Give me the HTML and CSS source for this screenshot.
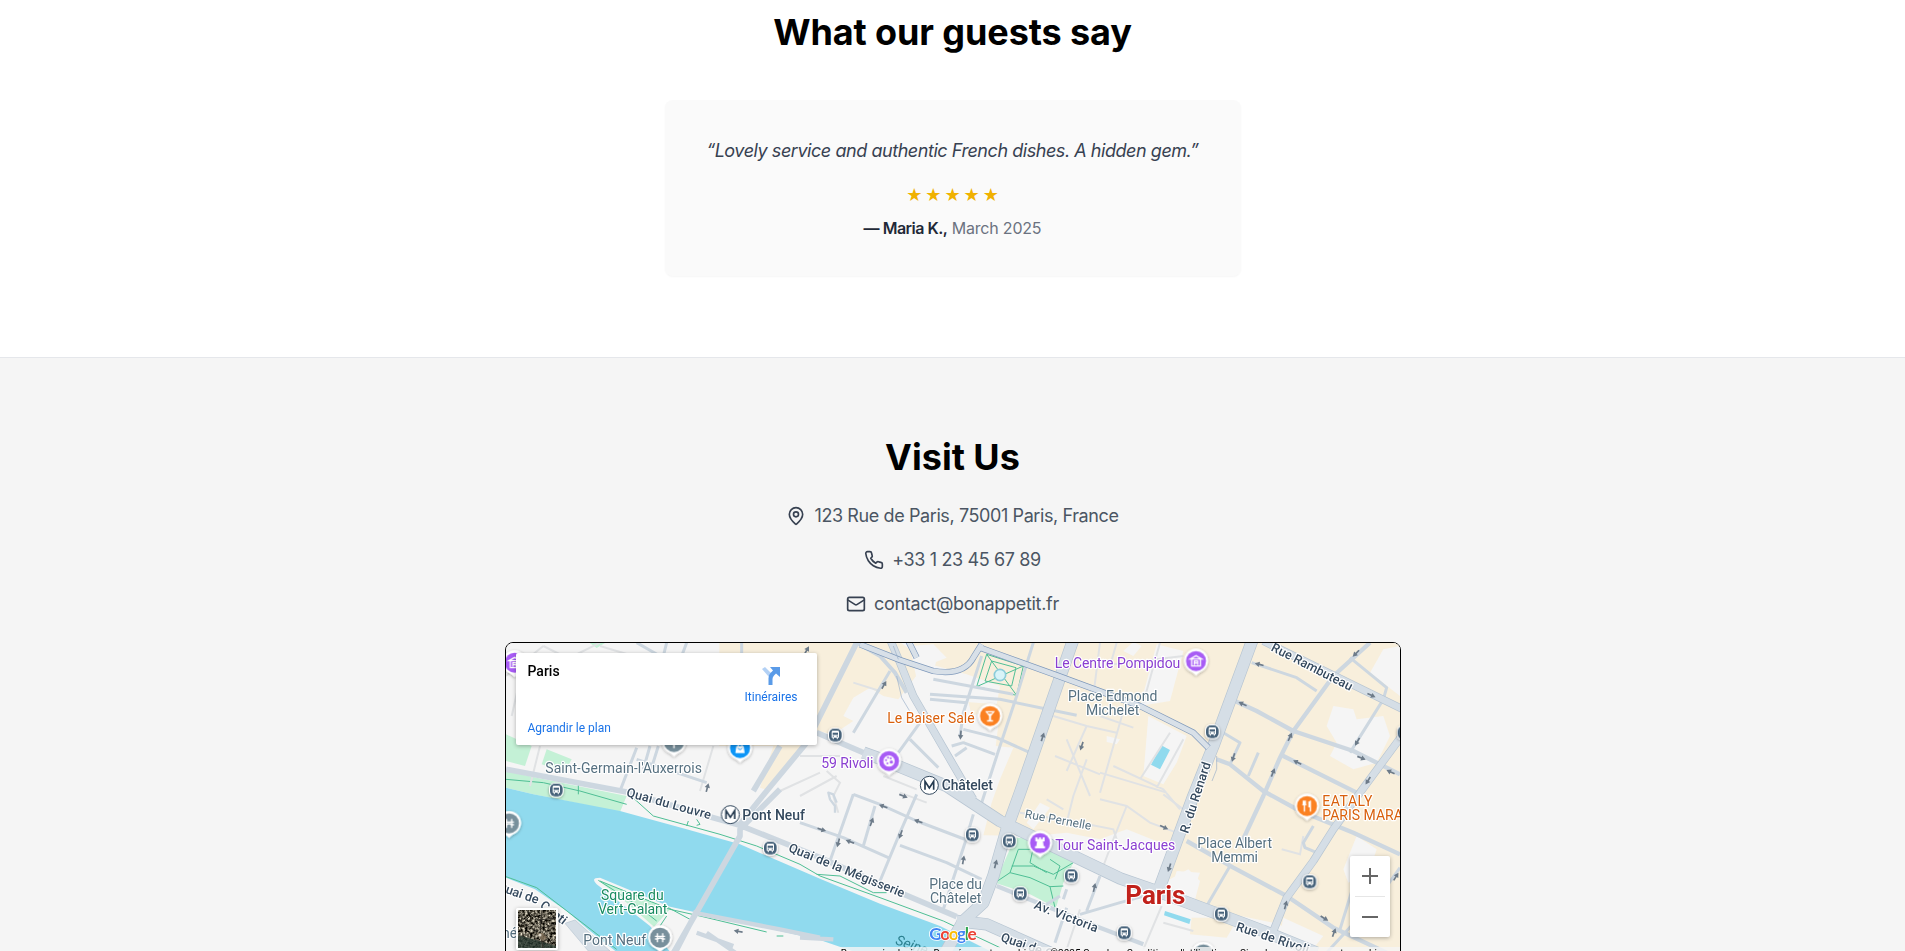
FILE: index.html
```html
<!DOCTYPE html>
<html lang="en">
<head>
<meta charset="utf-8">
<title>Bon Appétit</title>
<link rel="stylesheet" href="styles.css">
</head>
<body>
<section class="reviews">
  <h2 class="title title-reviews">What our guests say</h2>
  <figure class="review">
    <blockquote class="quote">“Lovely service and authentic French dishes. A hidden gem.”</blockquote>
    <div class="stars">★★★★★</div>
    <figcaption class="author"><strong>— Maria K.,</strong> <span>March 2025</span></figcaption>
  </figure>
</section>
<section class="visit">
  <h2 class="title title-visit">Visit Us</h2>
  <ul class="contacts">
    <li><svg class="icon" viewBox="0 0 24 24"><path d="M20 10c0 4.993-5.539 10.193-7.399 11.799a1 1 0 0 1-1.202 0C9.539 20.193 4 14.993 4 10a8 8 0 0 1 16 0"/><circle cx="12" cy="10" r="3"/></svg><span class="address">123 Rue de Paris, 75001 Paris, France</span></li>
    <li><svg class="icon" viewBox="0 0 24 24"><path d="M22 16.92v3a2 2 0 0 1-2.18 2 19.79 19.79 0 0 1-8.63-3.07 19.5 19.5 0 0 1-6-6 19.79 19.79 0 0 1-3.07-8.67A2 2 0 0 1 4.11 2h3a2 2 0 0 1 2 1.72 12.84 12.84 0 0 0 .7 2.81 2 2 0 0 1-.45 2.11L8.09 9.91a16 16 0 0 0 6 6l1.27-1.27a2 2 0 0 1 2.11-.45 12.84 12.84 0 0 0 2.81.7A2 2 0 0 1 22 16.92z"/></svg><span class="phone">+33 1 23 45 67 89</span></li>
    <li><svg class="icon" viewBox="0 0 24 24"><rect x="2" y="4" width="20" height="16" rx="2"/><path d="m22 7-8.97 5.7a1.94 1.94 0 0 1-2.06 0L2 7"/></svg><span class="email">contact@bonappetit.fr</span></li>
  </ul>
  <div class="map">
    <svg class="map-canvas" viewBox="18 21 2682 1344" preserveAspectRatio="xMinYMin slice">
      <defs>
        <g id="bus"><rect x="-22" y="-22" width="44" height="44" rx="18" fill="#fff"/><rect x="-19" y="-19" width="38" height="38" rx="15" fill="#46627a"/><path fill="#fff" d="M-11-9q0-4 4-4H7q4 0 4 4V8H8v4H4V8H-4v4H-8V8H-11z"/><path fill="#46627a" d="M-8-7H8V0H-8zM-8 3h4v3h-4zM4 3h4v3H4z"/></g>
        <g id="arrow"><path d="M-13 0H2" stroke="#6d7b89" stroke-width="5"/><path d="M0-8 14 0 0 8z" fill="#6d7b89"/></g>
        <path id="pin" d="M0 44C-6 36-12 33-18 30A36 36 0 1 1 18 30C12 33 6 36 0 44z" fill="#fff"/>
        <g id="metro"><circle r="27" fill="#fff" stroke="#34495e" stroke-width="3"/><path d="M-13 13V-12L0 8 13-12V13" fill="none" stroke="#263b50" stroke-width="5"/></g>
        <g id="museum" fill="none" stroke="#fff" stroke-width="4"><path d="M-17-6 0-16 17-6zM-15 15H15M-13-5V13M13-5V13M-5 12V0H5V12M-5 6H5"/></g>
        <g id="bridge" fill="none" stroke="#fff" stroke-width="4"><path d="M-15-4H15M-15 4H-7Q0-2 7 4H15M-8-13V14M8-13V14"/></g>
        <filter id="soft" x="-30%" y="-30%" width="160%" height="160%"><feDropShadow dx="0" dy="3" stdDeviation="4" flood-opacity=".35"/></filter>
      </defs>
      <rect x="18" y="21" width="2700" height="1400" fill="#f5f5f5"/>

      <g class="district">
        <path d="M658 18H1200L1280 80 1225 150 1195 190 1150 180 1110 155 1060 185 1030 240 1060 255 1000 295 950 285 905 335 800 462 780 455 820 330 658 330z"/>
        <path d="M1240 18H2710V1000H2480L2430 900 2320 860 2080 810 2100 735 2065 700 2000 735 1985 725 1970 755 1900 640 1800 610 1700 590 1600 600 1450 598 1475 500 1500 430 1540 335 1390 320 1420 260 1400 175 1300 110 1310 70 1250 60z"/>
        <path d="M2075 845H2215L2180 905 2070 895z"/>
      </g>
      <g class="block">
        <path d="M1230 30 1300 25 1340 65 1290 85 1400 115 1500 150 1490 205 1290 190 1250 130z"/>
        <path d="M1400 240 1500 225 1475 430 1390 360z"/>
        <path d="M1970 25 2050 45 2010 195 1920 210z"/>
        <path d="M1945 240 2060 300 2030 380 1990 445 1930 420z"/>
        <path d="M2650 40 2700 30V180L2610 110z"/>
        <path d="M2500 210 2560 220 2570 250 2650 240 2670 300 2630 380 2560 400 2490 360 2510 320 2480 270z"/>
        <path d="M2570 600 2630 640 2610 700 2545 740 2530 700z"/>
        <path d="M2350 845 2470 900 2430 950H2330z"/>
        <path d="M1900 18 1925 30 1900 60 1870 45z"/>
        <path d="M1620 500 1650 515 1600 580 1580 560z"/>
        <path d="M1800 610 1880 580 2030 640 1970 760 1810 700z"/>
        <path d="M2030 705 2100 710 2070 790 2010 770z"/>
        <path d="M1820 300 1860 310 1850 325 1820 318z"/>
      </g>

      <g class="park">
        <path d="M18 295 95 330 75 390 18 375zM140 340 215 370 195 408 125 385zM265 18H320L290 36z"/>
        <path d="M18 405 110 425 380 480 360 528 100 475 18 455z"/>
        <path d="M1545 605 1620 610 1720 680 1690 740 1668 815 1590 775 1485 740z"/>
      </g>

      <path class="water" d="M18 455 100 475 360 525 560 580 720 625 960 728 1140 803 1320 870 1500 960H1100L960 912 600 832 510 812 300 725Q270 725 290 745L450 870 520 960H365L270 885 200 825 105 760 18 725z"/>
      <path class="water" d="M1984 328 2010 342 1980 400 1953 386zM1995 825 2072 850 2068 864 1992 838z"/>
      <path class="park" d="M295 733 400 775 510 820 462 872 380 800z"/>

      <g class="path">
        <path d="M18 400 380 468 460 540 660 595 770 630 900 685 960 720 1140 785 1330 855 1500 935M18 430 130 440 240 465 380 505M235 445V475M565 555 560 570M590 550 600 565 590 568M18 722 110 755 350 940M295 733 400 800 470 855M300 735 510 820 600 840 800 888M505 815 570 850M480 870 500 840M830 900H850M950 715 1020 720 1120 770 1160 770"/>
        <path d="M1555 640 1530 710 1485 740M1530 710 1590 725 1650 752 1690 750M1535 690H1600L1660 715 1720 680M1600 635 1590 680 1640 710M1650 752 1665 815M1650 670 1680 690 1665 730M1555 640 1600 640"/>
        <path d="M1460 55 1570 90 1550 178 1430 152zM1460 55 1550 178M1570 90 1430 152M1475 75 1548 95 1535 150 1455 135z"/>
      </g>

      <g class="lane">
        <path d="M18 120 130 30M35 240 60 130M90 450 120 330M130 30 190 60M300 20 220 60M300 30 400 60M640 330 600 465M840 465 960 410M900 360 1020 360M1060 140 1140 165M1665 360 1800 415M1800 20 1780 180M1850 20 1830 90M1700 310 1770 480M1800 410 2000 470M1980 20 1930 200M1880 190 1800 470M1800 90 2050 60M1660 240 1760 270 1850 290M1760 270 1700 405M2050 310 1970 455M2010 290 1920 430M1840 390 1990 460 2040 520M1800 240 1900 275"/>
        <path d="M1800 490 1880 510 1950 560 2030 590M1880 510 1840 610 1810 690M1990 475 2050 520M1760 370 1720 480 1700 560M1640 490 1690 520M1560 530 1740 560 1840 580 1850 610M2345 640 2400 655 2410 600M1985 810 1930 940M1990 860 2080 885M1200 470 1280 500M1150 420 1250 460M1010 420 900 480M980 405 1020 440 1000 480 1015 530M1700 940 1740 820"/>
      </g>

      <g class="street">
        <path d="M410 20 480 60M500 20 490 60M560 20 545 60M725 20V60M410 335 360 465M410 370 620 440M450 330 430 400M475 330 450 410"/>
        <path d="M1170 105 1060 290M1300 130 1540 175M1290 175 1500 190 1730 238M1290 190 1400 200M1445 60 1390 230 1380 300M1600 20 1550 180 1500 330 1445 500M1390 280 1490 305 1590 350M1355 330 1390 320 1485 355M1365 360 1400 335M1230 310 1315 395M1260 260 1195 350"/>
        <path d="M1060 475 1140 505 1250 555 1400 612M1060 475 990 675M1125 510 1090 630M1250 475 1200 590 1140 735M900 560 1030 605 1165 665M1200 628 1340 680 1445 730M1420 535 1395 620 1330 820M1640 805 1680 780M1700 815 1665 920M1800 720 1760 825M1740 835 1860 800 1970 770M1690 790 1700 760"/>
        <path d="M2255 80 2390 125 2450 165M2550 65 2660 155 2650 190 2550 350M2170 290 2220 320 2190 385M2275 350 2245 420M2440 570 2410 620 2415 635 2450 650M2190 690 2120 810M2560 750 2520 880M2700 695 2650 765 2480 950"/>
        <path class="alley" d="M1010 500 1000 475 985 470 990 490 1005 510V530"/>
      </g>
      <g class="street wide">
        <path d="M2610 20 2500 120 2380 285 2340 365 2290 480 2220 630M2205 195 2270 225 2380 285 2560 345 2700 415M2350 360 2570 470M2150 370 2190 385 2290 465 2400 525 2560 590 2700 655M2060 615 2200 695 2360 780 2500 875 2660 950"/>
        <path d="M1490 750 1600 795 1800 875 1930 925M580 830 840 880 960 905M590 890 700 930M620 890 720 960M1000 910 900 905"/>
      </g>
      <g class="quay"><path d="M18 400 380 468 640 545 720 568 870 628 960 665 1200 770 1370 842M760 465 840 330M800 465 920 320 980 200 1070 20M720 565 800 465M950 290 1090 350M590 825 520 960M840 460 720 580V600L595 820 515 960"/></g>
      <path class="quay-block" d="M195 862 225 852 330 945H265z"/>

      <g class="avenue-edge">
        <path d="M1090 350 1140 368 1340 450 1500 555 1860 727 1970 765 2290 885 2450 950"/><path d="M1720 10 1640 240 1560 470 1520 580 1480 720 1450 800 1390 855 1330 960"/><path d="M2258 10 2140 330 2080 480 1975 765"/><path d="M1370 855 1460 865 1650 950"/>
      </g>
      <g class="avenue-edge mid"><path d="M1170 10 1200 80 1240 180 1350 370 1420 490"/><path d="M2705 300 2580 470 2500 580 2440 675 2360 785 2320 885"/><path d="M2290 15 2705 218"/></g>
      <path class="ramp" d="M1070 20 1140 60 1185 110 1220 170"/>
      <g class="avenue">
        <path d="M1090 350 1140 368 1340 450 1500 555 1860 727 1970 765 2290 885 2450 950"/><path d="M1720 10 1640 240 1560 470 1520 580 1480 720 1450 800 1390 855 1330 960"/><path d="M2258 10 2140 330 2080 480 1975 765"/><path d="M1370 855 1460 865 1650 950"/>
      </g>
      <g class="avenue mid"><path d="M1170 10 1200 80 1240 180 1350 370 1420 490"/><path d="M2705 300 2580 470 2500 580 2440 675 2360 785 2320 885"/><path d="M2290 15 2705 218"/></g>
      <g class="tunnel-edge"><path d="M1080 25 1200 72 1300 105Q1390 120 1420 65L1445 25M1225 15 1250 65"/><path d="M1440 35 1670 118 1920 210 2080 290 2125 335"/></g>
      <g class="tunnel"><path d="M1080 25 1200 72 1300 105Q1390 120 1420 65L1445 25M1225 15 1250 65"/><path d="M1440 35 1670 118 1920 210 2080 290 2125 335"/></g>
      <path class="tunnel-line" d="M2150 360V400L2136 435M1190 120 1205 185 1250 260M1180 30 1195 70"/>
      <circle cx="1500" cy="117" r="17" fill="#d9f4f8" stroke="#8bcdda" stroke-width="5"/>

      <g>
        <use href="#arrow" transform="translate(622 455) rotate(-75)"/><use href="#arrow" transform="translate(920 43) rotate(-60)"/><use href="#arrow" transform="translate(1152 147) rotate(-60)"/><use href="#arrow" transform="translate(1382 297) rotate(95)"/><use href="#arrow" transform="translate(1628 303) rotate(-72)"/><use href="#arrow" transform="translate(1745 330) rotate(108)"/>
        <use href="#arrow" transform="translate(715 886) rotate(190)"/><use href="#arrow" transform="translate(965 581) rotate(18)"/><use href="#arrow" transform="translate(1050 617) rotate(200)"/><use href="#arrow" transform="translate(1015 620) rotate(105)"/><use href="#arrow" transform="translate(1115 558) rotate(-70)"/><use href="#arrow" transform="translate(1150 511) rotate(200)"/><use href="#arrow" transform="translate(1210 480) rotate(22)"/><use href="#arrow" transform="translate(1255 556) rotate(200)"/><use href="#arrow" transform="translate(1202 595) rotate(110)"/><use href="#arrow" transform="translate(1390 672) rotate(-80)"/><use href="#arrow" transform="translate(1487 684) rotate(-75)"/><use href="#arrow" transform="translate(1783 755) rotate(-78)"/>
        <use href="#arrow" transform="translate(1992 574) rotate(25)"/><use href="#arrow" transform="translate(2008 695) rotate(108)"/><use href="#arrow" transform="translate(2278 85) rotate(195)"/><use href="#arrow" transform="translate(2568 52) rotate(135)"/><use href="#arrow" transform="translate(2614 178) rotate(25)"/><use href="#arrow" transform="translate(2228 204) rotate(205)"/><use href="#arrow" transform="translate(2370 303) rotate(-65)"/><use href="#arrow" transform="translate(2572 317) rotate(120)"/><use href="#arrow" transform="translate(2584 366) rotate(22)"/><use href="#arrow" transform="translate(2392 379) rotate(205)"/><use href="#arrow" transform="translate(2319 410) rotate(-68)"/><use href="#arrow" transform="translate(2200 364) rotate(108)"/><use href="#arrow" transform="translate(2672 408) rotate(205)"/><use href="#arrow" transform="translate(2604 434) rotate(122)"/><use href="#arrow" transform="translate(2357 807) rotate(-75)"/><use href="#arrow" transform="translate(2473 847) rotate(32)"/><use href="#arrow" transform="translate(2502 890) rotate(-70)"/><use href="#arrow" transform="translate(2688 722) rotate(-58)"/>
      </g>

      <g filter="url(#soft)">
        <use href="#bus" x="169" y="462"/><use href="#bus" x="811" y="636"/><use href="#bus" x="1006" y="297"/><use href="#bus" x="1417" y="596"/><use href="#bus" x="1528" y="615"/><use href="#bus" x="1714" y="719"/><use href="#bus" x="1561" y="773"/><use href="#bus" x="2137" y="287"/><use href="#bus" x="2429" y="737"/><use href="#bus" x="2164" y="834"/><use href="#bus" x="1873" y="890"/><use href="#bus" x="2712" y="290"/>
      </g>
      <g filter="url(#soft)">
        <g transform="translate(44 80)"><use href="#pin"/><circle r="30" fill="#a85cf5"/><use href="#museum"/></g>
        <g transform="translate(522 318)"><use href="#pin"/><circle r="30" fill="#78909c"/><path d="M0-15V18M-8-7H8" stroke="#fff" stroke-width="5"/></g>
        <g transform="translate(720 336)"><use href="#pin"/><circle r="30" fill="#0a95f7"/><path fill="#fff" d="M-11-6H11L14 15H-14z"/><path d="M-6-5Q-6-14 0-14T6-5" fill="none" stroke="#fff" stroke-width="3"/><path d="M-6 0Q0 10 6 0" fill="none" stroke="#0a95f7" stroke-width="3"/></g>
        <g transform="translate(1167 375)"><use href="#pin"/><circle r="30" fill="#a85cf5"/><circle r="17" fill="#fff"/><g fill="#a85cf5"><circle cx="-9" cy="-3" r="3"/><circle cx="-3" cy="-10" r="3"/><circle cx="5" cy="-8" r="3"/><circle cx="-5" cy="7" r="3"/><circle cx="7" cy="3" r="5"/></g></g>
        <g transform="translate(1470 240)"><use href="#pin"/><circle r="30" fill="#fb8123"/><path d="M-15-15H15L3 0V12H9V17H-9V12H-3V0zM-8-11-4-7H4L8-11z" fill="#fff" fill-rule="evenodd"/></g>
        <g transform="translate(2088 75)"><use href="#pin"/><circle r="30" fill="#a85cf5"/><use href="#museum"/></g>
        <g transform="translate(1620 621)"><use href="#pin"/><circle r="30" fill="#a85cf5"/><path fill="#fff" d="M-14-17H-8V-12H-3V-17H3V-12H8V-17H14V-5H9L11 9H15V16H-15V9H-11L-9-5H-14z"/></g>
        <g transform="translate(2421 510)"><use href="#pin"/><circle r="30" fill="#fb8123"/><path d="M-11-16V-4M-5-16V-4M-14-4H-2M-8-16V17M10-16V17M6-14V2H10" fill="none" stroke="#fff" stroke-width="4"/></g>
        <g transform="translate(27 562)"><use href="#pin"/><circle r="30" fill="#78909c"/><use href="#bridge"/></g>
        <g transform="translate(480 905)"><use href="#pin"/><circle r="30" fill="#78909c"/><use href="#bridge"/></g>
        <g transform="translate(2110 955)"><use href="#pin"/><circle r="30" fill="#78909c"/></g>
      </g>
      <use href="#metro" x="691" y="536"/><use href="#metro" x="1288" y="448"/>

      <g class="label">
        <text x="136" y="410" textLength="470">Saint-Germain-l'Auxerrois</text>
        <text x="1704" y="195" textLength="268">Place Edmond</text><text x="1758" y="237" textLength="160">Michelet</text>
        <text x="1288" y="759" textLength="158">Place du</text><text x="1290" y="801" textLength="154">Châtelet</text>
        <text x="2092" y="637" textLength="224">Place Albert</text><text x="2134" y="679" textLength="140">Memmi</text>
        <text x="250" y="926" textLength="188">Pont Neuf</text><text x="6" y="905">né</text>
        <text transform="translate(1573 545) rotate(10.5)" textLength="202" font-size="36">Rue Pernelle</text>
      </g>
      <g class="label violet"><text x="964" y="395" textLength="156">59 Rivoli</text><text x="1664" y="95" textLength="377">Le Centre Pompidou</text><text x="1666" y="643" textLength="360">Tour Saint-Jacques</text></g>
      <g class="label orange"><text x="1162" y="261" textLength="262">Le Baiser Salé</text><text x="2467" y="511" textLength="150">EATALY</text><text x="2467" y="552">PARIS MARAIS</text></g>
      <g class="label green"><text x="303" y="793" textLength="188">Square du</text><text x="294" y="835" textLength="208">Vert-Galant</text></g>
      <g class="label teal"><text transform="translate(1184 924) rotate(19)" font-style="italic">Seine</text></g>
      <g class="label strong">
        <text x="727" y="551" textLength="188">Pont Neuf</text><text x="1325" y="462" textLength="154">Châtelet</text>
        <text transform="translate(377 480) rotate(15.5)" textLength="262" font-size="38">Quai du Louvre</text>
        <text transform="translate(863 645) rotate(22)" textLength="372" font-size="38">Quai de la Mégisserie</text>
        <text transform="translate(1500 914) rotate(19)" font-size="38">Quai de Gesvres</text>
        <text transform="translate(1600 817) rotate(21)" textLength="202" font-size="38">Av. Victoria</text>
        <text transform="translate(2311 43) rotate(27)" textLength="268" font-size="38">Rue Rambuteau</text>
        <text transform="translate(2064 594) rotate(-72)" textLength="222" font-size="38">R. du Renard</text>
        <text transform="translate(2206 883) rotate(18)" textLength="228" font-size="38">Rue de Rivoli</text>
        <text transform="translate(-10 762) rotate(19)" font-size="38">Quai de</text><text transform="translate(118 812) rotate(38)" font-size="38">Conti</text>
      </g>
      <text class="city" x="1876" y="804" textLength="180">Paris</text>
      <text class="logo" x="1288" y="911" textLength="142"><tspan fill="#4285f4">G</tspan><tspan fill="#ea4335">o</tspan><tspan fill="#fbbc05">o</tspan><tspan fill="#4285f4">g</tspan><tspan fill="#34a853">l</tspan><tspan fill="#ea4335">e</tspan></text>
    </svg>

    <div class="place-card">
      <div class="place-name">Paris</div>
      <a class="directions"><svg viewBox="0 0 18 18"><path fill="#b3d1f5" d="M0 2 3 0 10 7 7 10z"/><path fill="#5a9be8" d="M6.500 18V11Q6.500 8 8.500 6L11 3.500 8 0H18V10L14 6.500 12 8.500Q10.500 10 10.500 12V18z"/></svg>Itinéraires</a>
      <a class="enlarge">Agrandir le plan</a>
    </div>
    <div class="satellite"><svg viewBox="0 0 38 38"><filter id="roofs" color-interpolation-filters="sRGB"><feTurbulence type="fractalNoise" baseFrequency=".4" numOctaves="3" seed="4"/><feColorMatrix values="1.7 0 0 0 -.46 1.66 0 0 0 -.46 1.56 0 0 0 -.46 0 0 0 0 1"/></filter><rect width="38" height="38" filter="url(#roofs)"/><path d="M0 25 18 30 38 36V38H0z" fill="#283932" opacity=".75"/><path d="M24 0 22 22 25 38M0 10 20 22M8 0 20 10 38 8M0 18 14 4M26 18 38 14" stroke="#37342d" fill="none"/><path d="M19 23h6l4 5-5 3z" fill="#8a7760" opacity=".7"/><circle cx="22" cy="25" r="1.500" fill="#d9d2c4"/></svg></div>
    <div class="zoom"><span class="plus"></span><span class="minus"></span></div>
    <div class="legal"><span>Raccourcis clavier</span><span>Données cartographiques ©2025 Google</span><span>Conditions d'utilisation</span><span>Signaler une erreur cartographique</span></div>
  </div>
</section>
</body>
</html>
```
FILE: styles.css
```css
* { box-sizing: border-box; }
html, body { margin: 0; height: 951px; overflow: hidden; }
body { font-family: Inter, "Liberation Sans", sans-serif; background: #fff; color: #000; }

.title { margin: 0; font-size: 36px; line-height: 40px; font-weight: 700; text-align: center; }
.title-reviews { letter-spacing: -0.1px; }
.title-visit { letter-spacing: 0; }

.reviews { display: flex; flex-direction: column; align-items: center; gap: 48px; padding: 12px 0 81px; }
.review { width: 576px; height: 176px; margin: 0; padding-top: 37px; border-radius: 8px; background: #fafafa; box-shadow: 0 1px 2px rgba(0,0,0,.04); display: flex; flex-direction: column; align-items: center; }
.quote { margin: 0; font-size: 18px; line-height: 28px; font-style: italic; color: #374151; white-space: nowrap; letter-spacing: -0.45px; }
.stars { margin-top: 18px; height: 24px; line-height: 24px; font-family: "DejaVu Sans", sans-serif; font-size: 18px; letter-spacing: 3px; padding-left: 3px; color: #f0b100; }
.author { margin-top: 9px; line-height: 24px; font-size: 16px; letter-spacing: -0.2px; color: #6b7280; }
.author strong { font-weight: 600; color: #1f2937; letter-spacing: -0.5px; }

.visit { display: flex; flex-direction: column; align-items: center; height: 594px; padding-top: 79px; border-top: 1px solid #e5e7eb; background: #f5f5f5; }
.contacts { display: flex; flex-direction: column; align-items: center; gap: 16px; margin: 25px 0 24px; padding: 0; list-style: none; font-size: 18px; line-height: 28px; color: #4b5563; }
.contacts li { display: flex; align-items: center; gap: 8px; white-space: nowrap; }
.address { letter-spacing: -0.4px; }
.phone { letter-spacing: -0.38px; }
.email { letter-spacing: -0.3px; }
.icon { width: 20px; height: 20px; fill: none; stroke: #374151; stroke-width: 2; stroke-linecap: round; stroke-linejoin: round; }

.map { position: relative; flex: none; width: 896px; height: 450px; border: 1px solid #000; border-radius: 8px; overflow: hidden; font-family: Roboto, sans-serif; }
.map-canvas { display: block; width: 894px; height: 448px; }
.district { fill: #f8efdc; }
.block { fill: #f5f5f5; }
.park { fill: #c4f1d6; }
.water { fill: #90daee; }
.path { fill: none; stroke: #4fbf95; stroke-width: 3; }
.lane { fill: none; stroke: #e0e2e4; stroke-width: 6; }
.street { fill: none; stroke: #cdd7e0; stroke-width: 9; stroke-linejoin: round; }
.street.wide { stroke-width: 13; }
.alley { stroke-width: 7; }
.quay { fill: none; stroke: #cdd7e0; stroke-width: 17; stroke-linejoin: round; }
.quay-block { fill: #d5dee6; stroke: #b7c5d2; stroke-width: 2; }
.avenue, .avenue-edge { fill: none; stroke-linejoin: round; }
.avenue { stroke: #d5dee6; stroke-width: 33; }
.avenue-edge { stroke: #b7c5d2; stroke-width: 37; }
.avenue.mid { stroke-width: 20; }
.avenue-edge.mid { stroke-width: 24; }
.ramp { fill: none; stroke: #cbd6e0; stroke-width: 12; }
.tunnel, .tunnel-edge { fill: none; stroke-linejoin: round; }
.tunnel { stroke: #d8e0e8; stroke-width: 15; }
.tunnel-edge { stroke: #7f99bb; stroke-width: 19; }
.tunnel-line { fill: none; stroke: #9aafc8; stroke-width: 2; }
.label { font-size: 42px; fill: #567080; stroke: #fff; stroke-width: 7; stroke-linejoin: round; paint-order: stroke; }
.violet { fill: #8a3fd1; }
.orange { fill: #d9600c; }
.green { fill: #188b60; }
.teal { fill: #2c8190; stroke: none; }
.strong { fill: #34495e; font-weight: 500; }
.city { font-size: 78px; font-weight: 700; fill: #c1211b; stroke: #fff; stroke-width: 7; paint-order: stroke; }
.logo { font-family: Lato, sans-serif; font-size: 52px; font-weight: 700; stroke: #fff; stroke-width: 5; paint-order: stroke; }

.place-card { position: absolute; left: 10px; top: 10px; width: 301px; height: 92px; padding: 9px 12px; background: #fff; border-radius: 2px; box-shadow: 0 1px 4px rgba(0,0,0,.3); }
.place-name { font-size: 14px; line-height: 18px; font-weight: 500; }
.directions { position: absolute; right: 19px; top: 14px; display: flex; flex-direction: column; align-items: center; gap: 4px; font-size: 12px; line-height: 16px; color: #1a73e8; }
.directions svg { width: 18px; height: 18px; }
.enlarge { position: absolute; left: 12px; bottom: 9px; font-size: 12px; line-height: 16px; color: #1a73e8; }
.satellite { position: absolute; left: 10px; top: 265px; width: 42px; height: 42px; border: 2px solid #fff; border-radius: 2px; box-shadow: 0 1px 4px rgba(0,0,0,.3); }
.satellite svg { display: block; width: 38px; height: 38px; }
.zoom { position: absolute; left: 844px; top: 213px; width: 40px; height: 81px; background: #fff; border-radius: 2px; box-shadow: 0 1px 4px rgba(0,0,0,.3); display: flex; flex-direction: column; padding: 0 5px; }
.zoom span { flex: 1; background: linear-gradient(#666, #666) center / 16px 2px no-repeat; }
.zoom .plus { border-bottom: 1px solid #e6e6e6; background: linear-gradient(#666, #666) center / 16px 2px no-repeat, linear-gradient(#666, #666) center / 2px 16px no-repeat; }
.legal { position: absolute; right: 0; top: 304px; height: 14px; display: flex; gap: 12px; padding: 0 6px; background: rgba(245,245,245,.8); font-size: 10px; line-height: 14px; color: #000; white-space: nowrap; }
```
